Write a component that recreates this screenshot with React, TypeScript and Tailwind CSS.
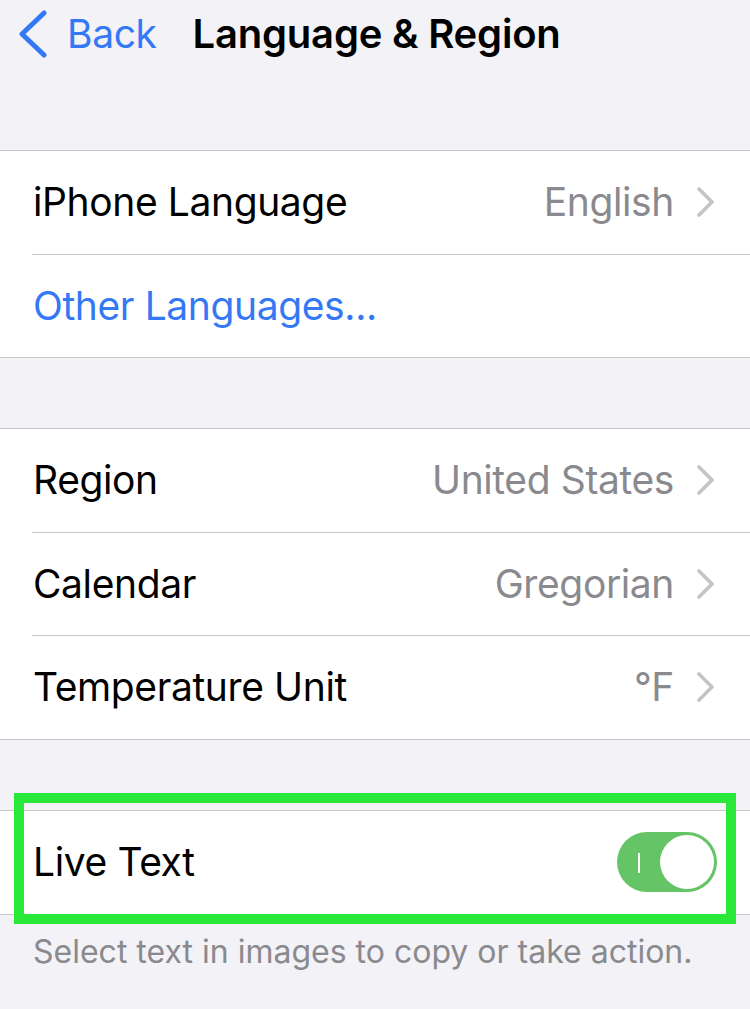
import React from "react";

const Chevron = () => (
  <svg width="20" height="30" viewBox="0 0 20 30" className="shrink-0">
    <polyline points="3,2 16,15 3,28" fill="none" stroke="#c4c4c7" strokeWidth="3.6" strokeLinecap="round" strokeLinejoin="round" />
  </svg>
);

const Row = ({ label, value, blue }: { label: string; value?: string; blue?: boolean }) => (
  <div className="flex h-[102.5px] items-center pl-[33px] pr-[34px]">
    <span className={`flex-1 text-[39px] tracking-[-0.01em] ${blue ? "text-[#3478f6]" : "text-black"}`}>{label}</span>
    {value !== undefined && (
      <div className="flex items-center gap-[22px]">
        <span className="text-[39px] tracking-[-0.01em] text-[#8a8a8e]">{value}</span>
        <Chevron />
      </div>
    )}
  </div>
);

const Sep = () => <div className="ml-[32px] h-px bg-[#c8c7cc]" />;

export default function App() {
  return (
    <div
      className="relative min-h-[1009px] w-[750px] overflow-hidden bg-[#f2f2f7]"
      style={{ fontFamily: "Inter, 'Liberation Sans', Arial, sans-serif" }}
    >
      {/* Header */}
      <div className="flex h-[67px] items-center">
        <div className="flex items-center pl-[18px]">
          <svg width="30" height="48" viewBox="0 0 30 48">
            <polyline points="26,3 4,24 26,45" fill="none" stroke="#3478f6" strokeWidth="5" strokeLinecap="round" strokeLinejoin="round" />
          </svg>
          <span className="ml-[19px] text-[39px] leading-none tracking-[-0.01em] text-[#3478f6]">Back</span>
        </div>
        <span className="ml-[36px] text-[40px] font-semibold leading-none tracking-[-0.005em] text-black">Language &amp; Region</span>
      </div>

      {/* Group 1 */}
      <div className="mt-[83px] border-y border-[#c8c7cc] bg-white">
        <Row label="iPhone Language" value="English" />
        <Sep />
        <Row label="Other Languages..." blue />
      </div>

      {/* Group 2 */}
      <div className="mt-[70px] border-y border-[#c8c7cc] bg-white">
        <Row label="Region" value="United States" />
        <Sep />
        <Row label="Calendar" value="Gregorian" />
        <Sep />
        <Row label="Temperature Unit" value="°F" />
      </div>

      {/* Group 3 */}
      <div className="relative mt-[70.5px]">
        <div className="border-y border-[#c8c7cc] bg-white">
          <div className="flex h-[102.5px] items-center pl-[33px] pr-[33px]">
            <span className="flex-1 text-[39px] tracking-[-0.01em] text-black">Live Text</span>
            <div className="relative h-[60px] w-[100px] rounded-full bg-[#65c466]">
              <div className="absolute left-[21px] top-[21px] h-[20px] w-[2px] bg-white" />
              <div className="absolute right-[3px] top-[3px] h-[54px] w-[54px] rounded-full bg-white" />
            </div>
          </div>
        </div>
        <div className="pointer-events-none absolute -top-[17px] left-[14px] right-[14px] -bottom-[9px] border-[10px] border-[#2ae83a]" />
      </div>

      <p className="mt-[19px] px-[33px] text-[32px] leading-[36px] text-[#8a8a8e]">
        Select text in images to copy or take action.
      </p>
    </div>
  );
}
